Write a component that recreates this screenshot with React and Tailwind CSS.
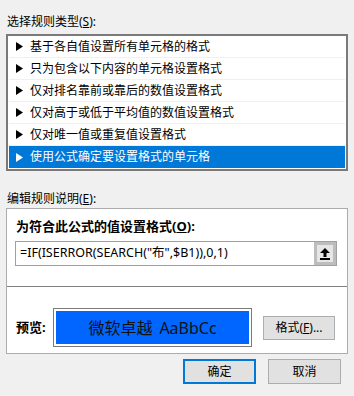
const rules = [
  '基于各自值设置所有单元格的格式',
  '只为包含以下内容的单元格设置格式',
  '仅对排名靠前或靠后的数值设置格式',
  '仅对高于或低于平均值的数值设置格式',
  '仅对唯一值或重复值设置格式',
  '使用公式确定要设置格式的单元格',
];

const Tri = ({ color }) => (
  <svg width="7" height="9" viewBox="0 0 7 9" className="shrink-0">
    <polygon points="0,0 7,4.5 0,9" fill={color} />
  </svg>
);

const App = () => {
  const selected = 5;

  return (
    <div
      className="w-[354px] h-[396px] bg-[#f0f0f0] px-[6px] text-[12px] text-black overflow-hidden"
      style={{ fontFamily: '"Noto Sans", "Noto Sans CJK SC", sans-serif' }}
    >
      {/* rule type */}
      <div className="mt-[14px] ml-[1px] leading-[16px]">
        选择规则类型(<span className="underline">S</span>):
      </div>
      <div className="mt-[4px] w-[342px] border-2 border-[#7a7a7a] bg-white px-[1px] pb-[1px]">
        {rules.map((r, i) => {
          const sel = i === selected;
          return (
            <div
              key={r}
              className={`h-[22px] flex items-center gap-[7px] pl-[7px] leading-none ${
                sel ? 'bg-[#0078d7] text-white' : 'border-b border-[#f0f0f0]'
              }`}
            >
              <Tri color={sel ? '#ffffff' : '#000000'} />
              <span>{r}</span>
            </div>
          );
        })}
      </div>

      {/* edit description */}
      <div className="mt-[20px] ml-[1px] leading-[16px]">
        编辑规则说明(<span className="underline">E</span>):
      </div>
      <div className="mt-[1px] w-[342px] border border-[#acacac] bg-white">
        <div className="pt-[9px] pl-[9px] leading-[16px] text-[13px] font-bold">
          为符合此公式的值设置格式(<span className="underline">O</span>):
        </div>
        <div className="mt-[7px] ml-[8px] w-[322px] h-[25px] flex border border-[#a0a0a0] bg-white">
          <div className="flex-1 flex items-center pl-[4px] text-[12.5px] leading-none">
            =IF(ISERROR(SEARCH("布",$B1)),0,1)
          </div>
          <div className="w-[22px] h-[23px] border-[3px] border-[#bdbdbd] bg-[#e6e6e6] flex items-center justify-center">
            <svg width="10" height="12" viewBox="0 0 10 12">
              <polygon points="5,0 10,5 6.5,5 6.5,9 3.5,9 3.5,5 0,5" fill="#000" />
              <rect x="0" y="10" width="10" height="2" fill="#000" />
            </svg>
          </div>
        </div>
        <div className="mt-[20px] h-px bg-[#808080]" />

        {/* preview */}
        <div className="mt-[21px] pb-[6px] flex items-center">
          <div className="ml-[9px] w-[37px] font-bold text-[13px] leading-none">预览:</div>
          <div className="w-[199px] h-[39px] border border-[#7a7a7a] p-[2px]">
            <div className="h-full bg-[#0066ff] flex items-center justify-center gap-[7px] text-[16px] text-[#111] leading-none">
              <span>微软卓越</span>
              <span>AaBbCc</span>
            </div>
          </div>
          <button className="ml-[11px] w-[72px] h-[24px] border border-[#adadad] bg-[#e1e1e1] text-[12px] leading-none">
            格式(<span className="underline">F</span>)...
          </button>
        </div>
      </div>

      {/* footer buttons */}
      <div className="mt-[5px] flex justify-end gap-[12px] pr-[7px]">
        <button className="w-[73px] h-[25px] border-2 border-[#0078d7] bg-[#e1e1e1] text-[12px] leading-none">
          确定
        </button>
        <button className="w-[73px] h-[25px] border border-[#adadad] bg-[#e1e1e1] text-[12px] leading-none">
          取消
        </button>
      </div>
    </div>
  );
};

export default App;
